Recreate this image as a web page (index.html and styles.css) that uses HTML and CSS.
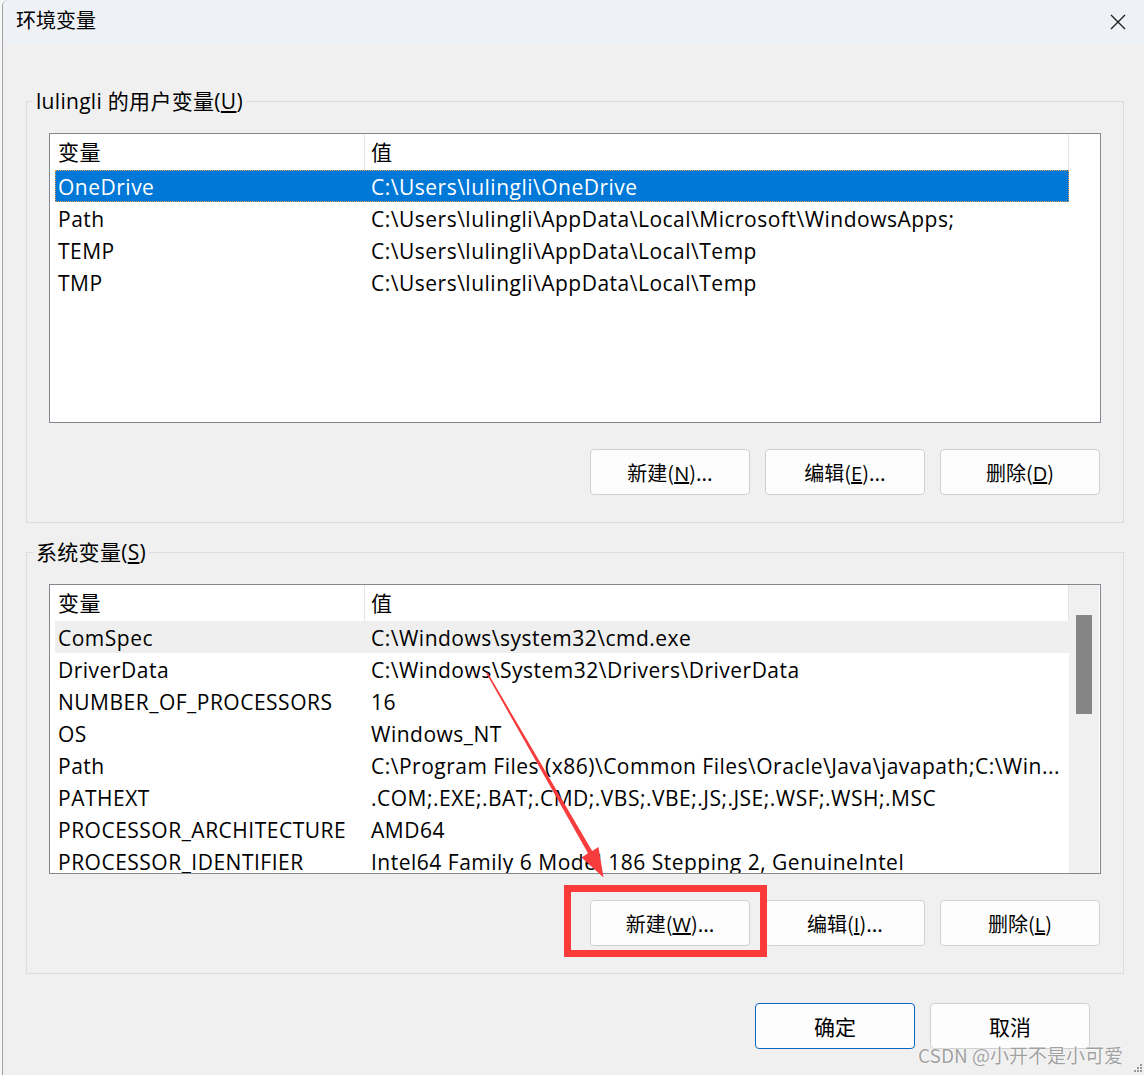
FILE: index.html
```html
<!DOCTYPE html>
<html lang="zh-CN">
<head>
    <meta charset="UTF-8">
    <title>环境变量</title>
    <link rel="stylesheet" href="styles.css">
</head>
<body>
    <div class="window">
        <div class="titlebar">
            <span class="title">环境变量</span>
            <span class="close">
                <svg width="16" height="16" viewBox="0 0 16 16"><path d="M1 1 L15 15 M15 1 L1 15" stroke="#1b1b1b" stroke-width="1.3" fill="none"/></svg>
            </span>
        </div>

        <div class="content">
            <fieldset class="group">
                <legend>lulingli 的用户变量(<u>U</u>)</legend>
                <div class="list">
                    <div class="rows">
                        <div class="row head"><div class="name">变量</div><div class="value">值</div></div>
                        <div class="row selected"><div class="name">OneDrive</div><div class="value">C:\Users\lulingli\OneDrive</div></div>
                        <div class="row"><div class="name">Path</div><div class="value">C:\Users\lulingli\AppData\Local\Microsoft\WindowsApps;</div></div>
                        <div class="row"><div class="name">TEMP</div><div class="value">C:\Users\lulingli\AppData\Local\Temp</div></div>
                        <div class="row"><div class="name">TMP</div><div class="value">C:\Users\lulingli\AppData\Local\Temp</div></div>
                    </div>
                    <div class="spacer"></div>
                </div>
                <div class="actions">
                    <button class="btn">新建(<u>N</u>)...</button>
                    <button class="btn">编辑(<u>E</u>)...</button>
                    <button class="btn">删除(<u>D</u>)</button>
                </div>
            </fieldset>

            <fieldset class="group second">
                <legend>系统变量(<u>S</u>)</legend>
                <div class="list">
                    <div class="rows">
                        <div class="row head"><div class="name">变量</div><div class="value">值</div></div>
                        <div class="row hover"><div class="name">ComSpec</div><div class="value">C:\Windows\system32\cmd.exe</div></div>
                        <div class="row"><div class="name">DriverData</div><div class="value">C:\Windows\System32\Drivers\DriverData</div></div>
                        <div class="row"><div class="name">NUMBER_OF_PROCESSORS</div><div class="value">16</div></div>
                        <div class="row"><div class="name">OS</div><div class="value">Windows_NT</div></div>
                        <div class="row"><div class="name">Path</div><div class="value">C:\Program Files (x86)\Common Files\Oracle\Java\javapath;C:\Win...</div></div>
                        <div class="row"><div class="name">PATHEXT</div><div class="value">.COM;.EXE;.BAT;.CMD;.VBS;.VBE;.JS;.JSE;.WSF;.WSH;.MSC</div></div>
                        <div class="row"><div class="name">PROCESSOR_ARCHITECTURE</div><div class="value">AMD64</div></div>
                        <div class="row"><div class="name">PROCESSOR_IDENTIFIER</div><div class="value">Intel64 Family 6 Model 186 Stepping 2, GenuineIntel</div></div>
                    </div>
                    <div class="scrollbar"><div class="thumb"></div></div>
                </div>
                <div class="actions">
                    <button class="btn">新建(<u>W</u>)...</button>
                    <button class="btn">编辑(<u>I</u>)...</button>
                    <button class="btn">删除(<u>L</u>)</button>
                </div>
            </fieldset>

            <div class="footer">
                <button class="btn big default">确定</button>
                <button class="btn big">取消</button>
            </div>
        </div>
    </div>

    <!-- пометки поверх скриншота -->
    <svg class="marks" width="1144" height="1075" viewBox="0 0 1144 1075">
        <polygon fill="#f63c3c" points="487.6,672.6 592.2,851 598.5,847 603.5,877.5 581.5,857.5 588,853.2 486.4,673.4"/>
        <rect x="567.5" y="888.5" width="196" height="65" fill="none" stroke="#fb3a3a" stroke-width="7"/>
        <g fill="#9a9a9a">
            <rect x="1140" y="1064" width="2" height="2"/>
            <rect x="1137" y="1067" width="2" height="2"/>
            <rect x="1140" y="1067" width="2" height="2"/>
            <rect x="1134" y="1070" width="2" height="2"/>
            <rect x="1137" y="1070" width="2" height="2"/>
            <rect x="1140" y="1070" width="2" height="2"/>
        </g>
    </svg>
    <div class="watermark">CSDN @小开不是小可爱</div>
</body>
</html>
```

FILE: styles.css
```css
* {
    box-sizing: border-box;
}

body {
    margin: 0;
    position: relative;
    width: 1144px;
    height: 1075px;
    overflow: hidden;
    background-color: #f6f6f6;
    font-family: "Open Sans", "Noto Sans CJK SC", sans-serif;
    color: #000;
}

.window {
    width: 1142px;
    height: 1075px;
    margin-left: 2px;
    border-left: 1px solid #a2a2a2;
    border-top-left-radius: 6px;
    background-color: #f0f0f0;
    overflow: hidden;
}

.titlebar {
    height: 44px;
    display: flex;
    align-items: center;
    justify-content: space-between;
    padding: 0 18px 5px 13px;
    background-color: #eef2f6;
}

.title {
    font-family: "Noto Sans CJK SC", sans-serif;
    font-size: 20px;
}

.close {
    display: flex;
    margin-top: 4px;
}

.content {
    padding: 42px 20px 0 23px;
}

.group {
    margin: 0;
    padding: 17px 22px 27px 22px;
    border: 1px solid #dcdcdc;
}

.group.second {
    margin-top: 14px;
}

.group legend {
    margin-left: -16px;
    padding: 0 3px;
    font-size: 21px;
    line-height: 30px;
    letter-spacing: 0.3px;
}

.list {
    height: 290px;
    display: flex;
    border: 1px solid #828790;
    background-color: #fff;
    overflow: hidden;
}

.rows {
    flex: 1;
    margin-left: 5px;
    overflow: hidden;
}

.spacer {
    width: 31px;
}

.row {
    display: flex;
    height: 32px;
    line-height: 34px;
    font-size: 21px;
    letter-spacing: 0.5px;
    white-space: nowrap;
}

.row .name {
    width: 310px;
    padding-left: 3px;
}

.row .value {
    flex: 1;
    padding-left: 6px;
}

.row.head {
    height: 36px;
    line-height: 36px;
}

.row.head .name,
.row.head .value {
    border-right: 1px solid #e5e5e5;
}

.row.selected {
    background-color: #0078d7;
    color: #fff;
    outline: 1px dotted #e89a4a;
    outline-offset: -1px;
}

.row.hover {
    background-color: #efefef;
}

.scrollbar {
    width: 30px;
    margin-right: 1px;
    padding: 30px 7px 0 7px;
    background-color: #f0f0f0;
}

.thumb {
    height: 99px;
    background-color: #858585;
}

.actions {
    display: flex;
    justify-content: flex-end;
    gap: 15px;
    margin-top: 26px;
    padding-right: 1px;
}

.btn {
    width: 160px;
    height: 46px;
    border: 1px solid #d0d0d0;
    border-radius: 4px;
    background-color: #fdfdfd;
    font-family: "Noto Sans CJK SC", sans-serif;
    font-size: 20px;
    color: #000;
    padding: 0;
}

.btn u {
    font-family: "Open Sans", sans-serif;
}

.footer {
    display: flex;
    justify-content: flex-end;
    gap: 15px;
    margin-top: 29px;
    padding-right: 34px;
}

.btn.big {
    font-size: 21px;
}

.btn.default {
    border-color: #0b66c3;
}

.marks {
    position: absolute;
    top: 0;
    left: 0;
    pointer-events: none;
}

.watermark {
    position: absolute;
    left: 918px;
    top: 1041px;
    font-family: "Noto Sans CJK SC", sans-serif;
    font-size: 19px;
    color: rgba(130, 130, 130, 0.75);
    text-shadow: 0 0 2px #fff, 0 0 1px #fff;
    white-space: nowrap;
}
```
